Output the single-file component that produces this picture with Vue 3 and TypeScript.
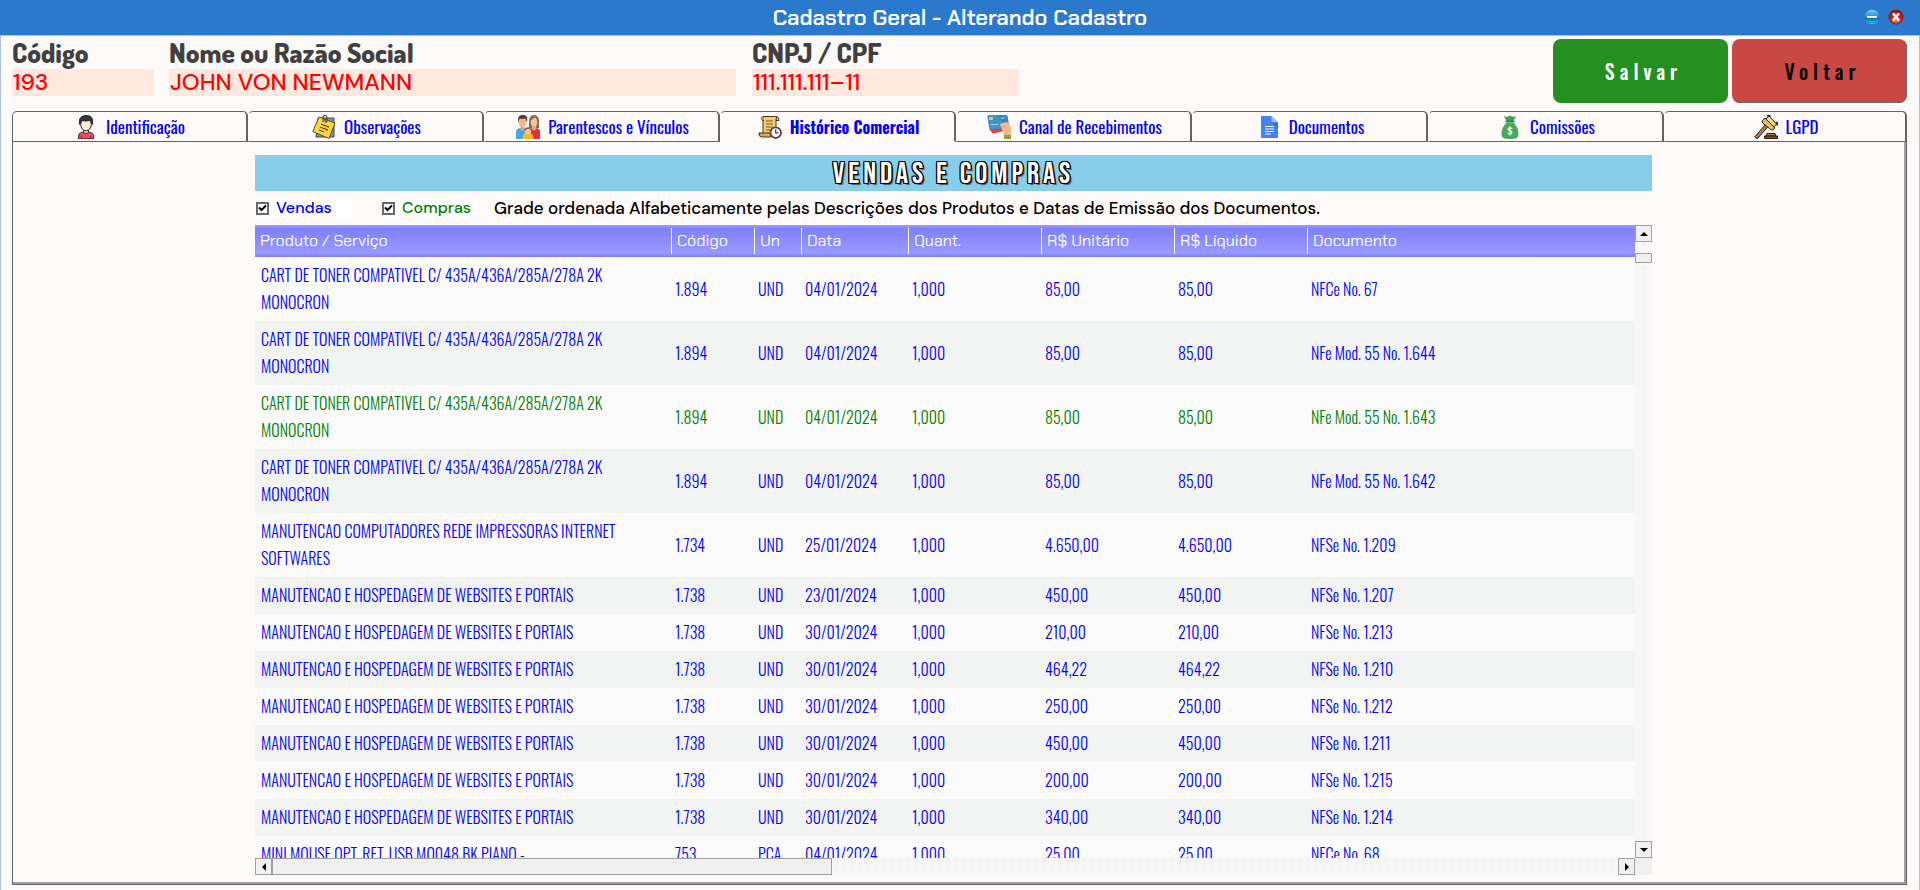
<script setup lang="ts">
import { ref, computed } from 'vue'

type Kind = 'venda' | 'compra'

interface Item {
  produto: string
  codigo: string
  un: string
  data: string
  quant: string
  unitario: string
  liquido: string
  documento: string
  kind: Kind
}

const tabs = [
  { id: 'identificacao', label: 'Identificação' },
  { id: 'observacoes', label: 'Observações' },
  { id: 'parentescos', label: 'Parentescos e Vínculos' },
  { id: 'historico', label: 'Histórico Comercial' },
  { id: 'recebimentos', label: 'Canal de Recebimentos' },
  { id: 'documentos', label: 'Documentos' },
  { id: 'comissoes', label: 'Comissões' },
  { id: 'lgpd', label: 'LGPD' },
]
const active = ref('historico')

const codigo = ref('193')
const nome = ref('JOHN VON NEWMANN')
const cpf = ref('111.111.111–11')

const showVendas = ref(true)
const showCompras = ref(true)

const columns = ['Produto / Serviço', 'Código', 'Un', 'Data', 'Quant.', 'R$ Unitário', 'R$ Líquido', 'Documento']

const toner = 'CART DE TONER COMPATIVEL C/ 435A/436A/285A/278A 2K\nMONOCRON'
const manutencao = 'MANUTENCAO COMPUTADORES REDE IMPRESSORAS INTERNET\nSOFTWARES'
const hospedagem = 'MANUTENCAO E HOSPEDAGEM DE WEBSITES E PORTAIS'

function item(produto: string, codigo: string, un: string, data: string, valor: string, documento: string, kind: Kind = 'venda'): Item {
  return { produto, codigo, un, data, quant: '1,000', unitario: valor, liquido: valor, documento, kind }
}

const items: Item[] = [
  item(toner, '1.894', 'UND', '04/01/2024', '85,00', 'NFCe No. 67'),
  item(toner, '1.894', 'UND', '04/01/2024', '85,00', 'NFe Mod. 55 No. 1.644'),
  item(toner, '1.894', 'UND', '04/01/2024', '85,00', 'NFe Mod. 55 No. 1.643', 'compra'),
  item(toner, '1.894', 'UND', '04/01/2024', '85,00', 'NFe Mod. 55 No. 1.642'),
  item(manutencao, '1.734', 'UND', '25/01/2024', '4.650,00', 'NFSe No. 1.209'),
  item(hospedagem, '1.738', 'UND', '23/01/2024', '450,00', 'NFSe No. 1.207'),
  item(hospedagem, '1.738', 'UND', '30/01/2024', '210,00', 'NFSe No. 1.213'),
  item(hospedagem, '1.738', 'UND', '30/01/2024', '464,22', 'NFSe No. 1.210'),
  item(hospedagem, '1.738', 'UND', '30/01/2024', '250,00', 'NFSe No. 1.212'),
  item(hospedagem, '1.738', 'UND', '30/01/2024', '450,00', 'NFSe No. 1.211'),
  item(hospedagem, '1.738', 'UND', '30/01/2024', '200,00', 'NFSe No. 1.215'),
  item(hospedagem, '1.738', 'UND', '30/01/2024', '340,00', 'NFSe No. 1.214'),
  item('MINI MOUSE OPT. RET. USB MO048 BK PIANO -', '753', 'PCA', '04/01/2024', '25,00', 'NFCe No. 68'),
]

const visible = computed(() =>
  items.filter((i) => (i.kind === 'venda' ? showVendas.value : showCompras.value)),
)
</script>

<template>
  <div class="window">
    <header class="titlebar">
      <h1>Cadastro Geral - Alterando Cadastro</h1>
      <div class="winbtns">
        <button type="button" aria-label="Minimizar">
          <svg viewBox="0 0 16 16">
            <defs>
              <linearGradient id="gmin" x1="0" y1="0" x2="0" y2="1">
                <stop offset="0" stop-color="#7fd0f2" />
                <stop offset="0.5" stop-color="#1787cc" />
                <stop offset="0.55" stop-color="#0667b4" />
                <stop offset="1" stop-color="#35c2f0" />
              </linearGradient>
            </defs>
            <circle cx="8" cy="8" r="7.3" fill="url(#gmin)" />
            <rect x="3" y="7" width="10" height="2" fill="#fff" />
          </svg>
        </button>
        <button type="button" aria-label="Fechar">
          <svg viewBox="0 0 16 16">
            <defs>
              <radialGradient id="gclose" cx="0.5" cy="0.85" r="0.8">
                <stop offset="0" stop-color="#f0643c" />
                <stop offset="0.6" stop-color="#cc1a10" />
                <stop offset="1" stop-color="#a80c08" />
              </radialGradient>
            </defs>
            <circle cx="8" cy="8" r="7" fill="url(#gclose)" stroke="#8f1414" />
            <path d="M5 4.200L11 11.800M11 4.200L5 11.800" stroke="#fff" stroke-width="2.600" />
          </svg>
        </button>
      </div>
    </header>

    <div class="body">
      <div class="head">
        <div class="field code">
          <label for="codigo">Código</label>
          <input id="codigo" v-model="codigo" type="text" readonly />
        </div>
        <div class="field name">
          <label for="nome">Nome ou Razão Social</label>
          <input id="nome" v-model="nome" type="text" readonly />
        </div>
        <div class="field doc">
          <label for="cpf">CNPJ / CPF</label>
          <input id="cpf" v-model="cpf" type="text" readonly />
        </div>
        <div class="actions">
          <button type="button" class="save">Salvar</button>
          <button type="button" class="back">Voltar</button>
        </div>
      </div>

      <div class="tabs" role="tablist">
        <button
          v-for="t in tabs"
          :key="t.id"
          type="button"
          role="tab"
          class="tab"
          :class="{ active: t.id === active }"
          :aria-selected="t.id === active"
          @click="active = t.id"
        >
          <svg v-if="t.id === 'identificacao'" viewBox="0 0 24 24">
            <path d="M4.500 24v-2.500c0-3.500 2.500-4.500 7.500-4.500s7.500 1 7.500 4.500v2.500z" fill="#f0465a" stroke="#3a1a26" />
            <path d="M9.500 14h5v3.500q-2.500 2-5 0z" fill="#fbe3cd" stroke="#2b2b36" />
            <ellipse cx="12" cy="9.500" rx="5.300" ry="6.300" fill="#fdebd8" stroke="#2b2b36" />
            <path d="M5.800 9.500C4 3 8 .6 12.500 .6c5 0 7 3 5.700 8.900-.8-2-1-3.500-2-4.500-2.500 1.300-6 1-8.400.4-1 1.200-1.200 2.500-2 4.100z" fill="#33333f" stroke="#1d1d26" />
            <path d="M7.500 21v3M16.500 21v3" stroke="#8f2235" />
          </svg>
          <svg v-else-if="t.id === 'observacoes'" viewBox="0 0 24 24">
            <path d="M6 3h16v19H4z" fill="#7d98a8" stroke="#3b4a52" />
            <path d="M7 2l16 6-6 15.500L.8 16.500z" fill="#fbd643" stroke="#5b4a14" />
            <path d="M9 9l8 3.200M8 12l8 3.200M7 15l5 2" stroke="#5b4a14" stroke-width="1.300" />
            <path d="M11 7V2.500a2 2 0 0 1 4 0V6a1 1 0 0 1-2 0V3.500" fill="none" stroke="#3f4850" stroke-width="1.100" />
          </svg>
          <svg v-else-if="t.id === 'parentescos'" viewBox="0 0 24 24">
            <path d="M0 24v-7c0-3 2-4 6-4s6 1 6 4v7z" fill="#4aa8dc" />
            <path d="M12 24v-7c0-3 2-4 6-4s6 1 6 4v7z" fill="#d8323c" />
            <path d="M13 13V6c0-8 10-8 10 0v7z" fill="#8a6a5c" />
            <path d="M4.500 9h4v5l-2 2-2-2zM16 9h4v5l-2 2-2-2z" fill="#e8a878" />
            <ellipse cx="6.500" cy="7" rx="4" ry="4.800" fill="#f3b888" />
            <ellipse cx="18" cy="7" rx="3.300" ry="4.500" fill="#f6c49a" />
            <path d="M2.200 7C1.500 1 4 0 7 0c3.500 0 5 2 4 7-1-1-1-3-2-3.500-2 .5-4 .5-5 0C3 4.500 3 6 2.200 7z" fill="#4a3a34" />
            <path d="M14.500 7c0-3 4-3 4-5 2 1 3 3 3 5l1-3c-1-5-8-5-8.500 0z" fill="#8a6a5c" />
            <path d="M6.500 24c0-5 1.500-6.500 5-6.500s6 1.500 6 6.500z" fill="#fbb42c" />
            <circle cx="12" cy="16" r="3.200" fill="#f8c8a0" />
            <path d="M8.600 16c-.3-5 7-5 6.800 0-1-2-2-2.500-3.400-2.200S9.500 15 8.600 16z" fill="#8a4a24" />
          </svg>
          <svg v-else-if="t.id === 'historico'" viewBox="0 0 24 24">
            <path d="M5 1.500h13.500q2.500.5 2.500 4h-3V20H5z" fill="#f2cd73" stroke="#4a3420" />
            <path d="M5 1.500q-3 1.500-.5 4H6M18 5.500q0-3 1-4" fill="#dba94c" stroke="#4a3420" />
            <path d="M.8 18h12v4H3.500Q1 22 .8 18z" fill="#d9a848" stroke="#4a3420" />
            <path d="M8 6h7M8 9h7M8 12h7M8 15h4" stroke="#7a5a24" stroke-width="1.200" />
            <circle cx="17.700" cy="17.700" r="5.300" fill="#fff" stroke="#6e3a40" stroke-width="1.800" />
            <path d="M17.700 14.200v3.700h2.600" fill="none" stroke="#2f3a4a" stroke-width="1.200" />
          </svg>
          <svg v-else-if="t.id === 'recebimentos'" viewBox="0 0 24 24">
            <path d="M2 14l15-5 3 6-13 3.500q-1 .3-1.600-.5z" fill="#d8453c" />
            <path d="M1.500 0h17q1.700 0 2 1.500L22 11q0 1.500-2 2L4 14.500q-1.500 0-1.800-1.500L.3 2Q0 .3 1.500 0z" fill="#3f94cc" />
            <path d="M10 0h8.500q1.700 0 2 1.500L22 11q0 1.500-1.500 2z" fill="#3384ba" />
            <rect x="2" y="2" width="4" height="3" rx=".7" fill="#f5c451" />
            <path d="M4 9.500h7M14 3h4" stroke="#9fd0ee" />
            <path d="M13.500 11q-1.500-2 1-2.500l5-1.500q3 1 4.500 5v9h-7l-1-4z" fill="#f6b88e" />
            <path d="M13.500 11q2 1.500 5 .5" fill="none" stroke="#df9468" />
            <path d="M17 20h7v4h-7z" fill="#7cab34" />
          </svg>
          <svg v-else-if="t.id === 'documentos'" viewBox="0 0 24 24">
            <path d="M5 1h9.500L21 7.500V22q0 1-1 1H5q-1 0-1-1V2q0-1 1-1z" fill="#4384f2" />
            <path d="M14.500 1L21 7.500h-6.500z" fill="#9dc0fa" />
            <path d="M14.500 7.500H21V13z" fill="#356ccc" />
            <path d="M8 11.500h9M8 14h9M8 16.500h9M8 19h6" stroke="#f3f6fd" stroke-width="1.200" />
          </svg>
          <svg v-else-if="t.id === 'comissoes'" viewBox="0 0 24 24">
            <path d="M6 1l3 1 3-1.500L15 2l3-1-2.500 5h-7z" fill="#3f9f52" />
            <path d="M8.500 7.500h7C19 11 20.500 15 20.500 19c0 4-2.500 5-8.500 5s-8.500-1-8.500-5c0-4 1.500-8 5-11.500z" fill="#45aa5a" />
            <path d="M7.500 6.500h9" stroke="#2d7f40" stroke-width="1.600" />
            <path d="M14.200 14q-.8-1.200-2.200-1.200c-2.600 0-2.600 2.800 0 3.100s2.600 3.200 0 3.200q-1.500 0-2.300-1.200M12 11.500v9" fill="none" stroke="#f2faf3" stroke-width="1.200" />
          </svg>
          <svg v-else viewBox="0 0 24 24">
            <path d="M1 21.500L12 9l2.500 2L3.500 23.500q-2 .5-2.500-2z" fill="#b87a48" stroke="#2c1a0c" />
            <path d="M12 4l3-3 7.500 8-3 3.500z" fill="#f6db8c" stroke="#2c1a0c" />
            <path d="M8.500 5.500L11 3l10 10-2.500 2q-2 0-3-1.500L9 8.500q-1.200-1.500-.5-3z" fill="#e6bc60" stroke="#2c1a0c" />
            <path d="M13 1l2-1 1.500 1.500M22 7l1.700 1.500-1 2" fill="none" stroke="#2c1a0c" stroke-width="1.500" />
            <path d="M13 18.500h8l1 2.500H12z" fill="#b87a48" stroke="#2c1a0c" />
            <path d="M10.500 21h13v2.500h-13z" fill="#8a4f24" stroke="#2c1a0c" />
          </svg>
          <span>{{ t.label }}</span>
        </button>
      </div>

      <main class="panel" role="tabpanel">
        <h2 class="banner">Vendas e Compras</h2>
        <div class="filters">
          <label class="check sale"><input v-model="showVendas" type="checkbox" />Vendas</label>
          <label class="check buy"><input v-model="showCompras" type="checkbox" />Compras</label>
          <p>Grade ordenada Alfabeticamente pelas Descrições dos Produtos e Datas de Emissão dos Documentos.</p>
        </div>

        <div class="grid">
          <div class="rows">
            <table>
              <colgroup>
                <col class="c-prod" />
                <col class="c-cod" />
                <col class="c-un" />
                <col class="c-data" />
                <col class="c-num" />
                <col class="c-num" />
                <col class="c-num" />
                <col />
              </colgroup>
              <thead>
                <tr>
                  <th v-for="c in columns" :key="c" scope="col"><span>{{ c }}</span></th>
                </tr>
              </thead>
              <tbody>
                <tr v-for="(r, i) in visible" :key="i" :class="r.kind">
                  <td class="prod">{{ r.produto }}</td>
                  <td>{{ r.codigo }}</td>
                  <td>{{ r.un }}</td>
                  <td>{{ r.data }}</td>
                  <td>{{ r.quant }}</td>
                  <td>{{ r.unitario }}</td>
                  <td>{{ r.liquido }}</td>
                  <td>{{ r.documento }}</td>
                </tr>
              </tbody>
            </table>
          </div>
          <div class="vbar">
            <button type="button" class="arrow" aria-label="Rolar para cima">
              <svg viewBox="0 0 8 4"><path d="M4 0l4 4H0z" /></svg>
            </button>
            <span class="vthumb"></span>
            <button type="button" class="arrow end" aria-label="Rolar para baixo">
              <svg viewBox="0 0 8 4"><path d="M0 0h8L4 4z" /></svg>
            </button>
          </div>
          <div class="hbar">
            <button type="button" class="arrow side" aria-label="Rolar para a esquerda">
              <svg viewBox="0 0 4 8"><path d="M4 0v8L0 4z" /></svg>
            </button>
            <span class="hthumb"></span>
            <button type="button" class="arrow side end" aria-label="Rolar para a direita">
              <svg viewBox="0 0 4 8"><path d="M0 0l4 4-4 4z" /></svg>
            </button>
          </div>
          <div class="corner"></div>
        </div>
      </main>
    </div>
  </div>
</template>

<style>
body {
  margin: 0;
  background: #fffafa;
}
</style>

<style scoped>
* {
  box-sizing: border-box;
}
.window {
  height: 100vh;
  display: flex;
  flex-direction: column;
  background: #fffafa;
  font-family: "DM Sans", "Open Sans", sans-serif;
}
button {
  font: inherit;
  padding: 0;
  cursor: pointer;
}
.titlebar {
  position: relative;
  height: 35px;
  flex: none;
  background: #2a79cc;
  display: flex;
  align-items: center;
  justify-content: center;
}
h1 {
  margin: 0;
  color: #fff;
  font: 600 22px/34px "Chakra Petch", "Roboto", sans-serif;
}
.winbtns {
  position: absolute;
  right: 16px;
  top: 9px;
  display: flex;
  gap: 8px;
}
.winbtns button {
  width: 16px;
  height: 16px;
  border: 0;
  background: none;
}
.winbtns svg {
  display: block;
  width: 16px;
  height: 16px;
}
.body {
  flex: 1;
  min-height: 0;
  display: flex;
  flex-direction: column;
  border: 1px solid #a9c0de;
  border-bottom: 0;
  padding: 0 12px 5px 11px;
}
.head {
  display: flex;
  align-items: flex-start;
  height: 75px;
  flex: none;
}
.field {
  display: flex;
  flex-direction: column;
}
.field label {
  font: 800 27px/33px "Dosis", "Open Sans", sans-serif;
  color: #404040;
}
.field input {
  width: 100%;
  height: 27px;
  border: 0;
  border-radius: 0;
  outline: 0;
  padding: 0 1px;
  background: #ffe9df;
  color: #f00;
  font: 500 23px/27px "DM Sans", "Open Sans", sans-serif;
}
.code {
  width: 142px;
  margin-right: 15px;
}
.name {
  width: 567px;
  margin-right: 16px;
}
.doc {
  width: 267px;
}
.actions {
  margin-left: auto;
  padding-top: 3px;
  display: flex;
  gap: 4px;
}
.actions button {
  width: 175px;
  height: 64px;
  border: 0;
  border-radius: 8px;
  padding-left: 6px;
  font: 500 20px/64px "Oswald", "Roboto", sans-serif;
  letter-spacing: 5px;
}
.save {
  background: #259021;
  color: #fff;
}
.back {
  background: #ca4843;
  color: #000;
  box-shadow: inset -1px -1px 0 #6b6b6b;
}
.tabs {
  display: grid;
  grid-template-columns: repeat(7, 236fr) 243fr;
  height: 31px;
  flex: none;
  border-bottom: 1px solid #646464;
}
.tab {
  display: flex;
  align-items: center;
  justify-content: center;
  gap: 8px;
  height: 31px;
  border: 1px solid #646464;
  border-right-width: 2px;
  border-radius: 5px 5px 0 0;
  background: #fffafa;
  color: #00f;
  font: 400 17px/24px "Oswald", "Roboto", sans-serif;
}
.tab + .tab {
  border-left-color: transparent;
  padding-left: 2px;
}
.tab.active {
  border-bottom-color: #fffafa;
  font-weight: 700;
  font-size: 16px;
}
.tab svg {
  width: 24px;
  height: 24px;
  flex: none;
}
.panel {
  flex: 1;
  min-height: 0;
  display: flex;
  flex-direction: column;
  border: solid #646464;
  border-width: 0 1px 1px;
  box-shadow: inset -2px -2px 0 #a0a0a0;
  padding: 13px 254px 9px 242px;
}
.banner {
  margin: 0;
  height: 36px;
  flex: none;
  background: #87ceeb;
  color: #fff;
  text-align: center;
  text-transform: uppercase;
  font: 400 30px/38px "Bebas Neue", "Oswald", sans-serif;
  letter-spacing: 4px;
  text-shadow: -1px -1px 0 #000, 1px -1px 0 #000, -1px 1px 0 #000, 1px 1px 0 #000, 0 -1px 0 #000, 0 1px 0 #000, -1px 0 0 #000, 1px 0 0 #000, 2px 2px 1px #555;
}
.filters {
  display: flex;
  align-items: center;
  height: 34px;
  flex: none;
  font-weight: 500;
  font-size: 17px;
  line-height: 18px;
}
.check {
  display: flex;
  align-items: center;
  width: 98px;
  height: 18px;
  margin: 0 28px 0 0;
  background: #fff;
  gap: 7px;
  font-size: 16px;
}
.check input {
  appearance: none;
  width: 13px;
  height: 13px;
  margin: 0;
  border: 2px solid #696969;
  background: #fff;
}
.check input:checked {
  background: #fff url("data:image/svg+xml,%3Csvg xmlns='http://www.w3.org/2000/svg' viewBox='0 0 9 9'%3E%3Cpath d='M1 3.500l2.500 2.500L8 1.500' fill='none' stroke='%23000' stroke-width='2'/%3E%3C/svg%3E") center / 9px 9px no-repeat;
}
.sale {
  color: #00f;
  margin-left: 1px;
}
.buy {
  color: #008000;
  margin-right: 14px;
}
.filters p {
  margin: 0;
  white-space: nowrap;
  color: #000;
}
.grid {
  flex: 1;
  min-height: 0;
  display: grid;
  grid-template-columns: minmax(0, 1fr) 17px;
  grid-template-rows: minmax(0, 1fr) 17px;
}
.rows {
  overflow: hidden;
}
table {
  width: 100%;
  table-layout: fixed;
  border-collapse: collapse;
}
.c-prod {
  width: 416px;
}
.c-cod {
  width: 83px;
}
.c-un {
  width: 47px;
}
.c-data {
  width: 107px;
}
.c-num {
  width: 133px;
}
thead tr {
  height: 32px;
  background: linear-gradient(#9c9cff 0, #8080ff 4px, #9999ff 28px, #7f7ff0 32px);
}
th {
  padding: 0;
  text-align: left;
}
th span {
  display: block;
  height: 26px;
  padding-left: 5px;
  border-left: 1px solid #fff;
  color: #fff;
  font: 400 16px/25px "Chakra Petch", "Roboto", sans-serif;
}
th:first-child span {
  border-left: 0;
}
td {
  padding: 5px 0 5px 4px;
  font: 300 16px/27px "Oswald", "Roboto", sans-serif;
  white-space: pre-line;
}
td.prod {
  padding-left: 6px;
}
tbody tr {
  background: #fbfbfb;
}
tbody tr:nth-child(even) {
  background: #f1f4f3;
}
.venda {
  color: #00f;
}
.compra {
  color: #008000;
}
.vbar,
.hbar {
  display: flex;
  background: repeating-conic-gradient(#f0f0f0 0 25%, #fff 0 50%) 0 0 / 2px 2px;
}
.vbar {
  flex-direction: column;
}
.arrow {
  display: flex;
  align-items: center;
  justify-content: center;
  width: 17px;
  height: 17px;
  border: 1px solid #a0a0a0;
  background: #f0f0f0;
}
.arrow svg {
  width: 8px;
  height: 4px;
}
.arrow.side svg {
  width: 4px;
  height: 8px;
}
.vbar .end {
  margin-top: auto;
}
.hbar .end {
  margin-left: auto;
}
.vthumb {
  height: 10px;
  margin-top: 11px;
  border: 1px solid #a0a0a0;
  background: #f0f0f0;
}
.hthumb {
  width: 560px;
  border: 1px solid #a0a0a0;
  background: #f0f0f0;
}
.corner {
  background: #f0f0f0;
}
</style>
